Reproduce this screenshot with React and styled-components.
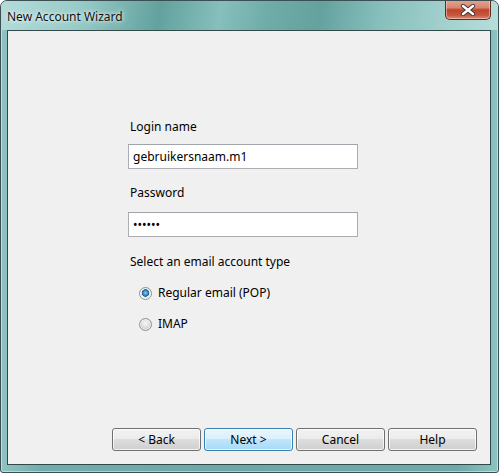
import { useState } from "react";
import styled, { createGlobalStyle } from "styled-components";

const GlobalStyle = createGlobalStyle`
  html, body {
    margin: 0;
    padding: 0;
    background: #ffffff;
  }
  body {
    font-family: "Noto Sans", "Open Sans", sans-serif;
    font-size: 12px;
    color: #000;
  }
`;

export default function App() {
  const [accountType, setAccountType] = useState("pop");
  const [login, setLogin] = useState("gebruikersnaam.m1");
  const [password, setPassword] = useState("123456");

  return (
    <>
      <GlobalStyle />
      <Window>
        <TitleBar>
          <Title>New Account Wizard</Title>
          <CloseButton aria-label="Close">
            <svg width="16" height="12" viewBox="0 0 16 12">
              <path
                d="M3 2 L13 10 M13 2 L3 10"
                stroke="#3a3a3a"
                strokeWidth="4.2"
                strokeLinecap="round"
              />
              <path
                d="M3 2 L13 10 M13 2 L3 10"
                stroke="#ffffff"
                strokeWidth="2.4"
                strokeLinecap="round"
              />
            </svg>
          </CloseButton>
        </TitleBar>
        <Client>
          <Form>
            <Label>Login name</Label>
            <TextInput
              value={login}
              onChange={(e) => setLogin(e.target.value)}
            />
            <Label $top={15} $bottom={11}>Password</Label>
            <TextInput
              type="password"
              value={password}
              onChange={(e) => setPassword(e.target.value)}
            />
            <Label $top={16}>Select an email account type</Label>
            <RadioRow $top={6}>
              <Radio
                $checked={accountType === "pop"}
                onClick={() => setAccountType("pop")}
              />
              Regular email (POP)
            </RadioRow>
            <RadioRow $top={15}>
              <Radio
                $checked={accountType === "imap"}
                onClick={() => setAccountType("imap")}
              />
              IMAP
            </RadioRow>
          </Form>
          <ButtonRow>
            <Button>&lt; Back</Button>
            <Button $primary>Next &gt;</Button>
            <Button>Cancel</Button>
            <Button>Help</Button>
          </ButtonRow>
        </Client>
      </Window>
    </>
  );
}

const Window = styled.div`
  width: 499px;
  height: 473px;
  box-sizing: border-box;
  display: flex;
  flex-direction: column;
  border: 1px solid #3d4f52;
  border-radius: 7px 7px 3px 3px;
  background: linear-gradient(
    90deg,
    #8fc4c1 0%,
    #6faeab 8%,
    #6aa9a6 50%,
    #6caba8 92%,
    #8cc3c0 100%
  );
  box-shadow: inset 0 0 0 1px rgba(255, 255, 255, 0.45);
  overflow: hidden;
`;

const TitleBar = styled.div`
  height: 29px;
  flex: none;
  display: flex;
  align-items: flex-start;
  justify-content: space-between;
  padding: 0 7px 0 6px;
  background: linear-gradient(
    100deg,
    #b4dcd9 0%,
    #97cbc8 16%,
    #62a29e 32%,
    #86bfbb 44%,
    #6eaca8 54%,
    #64a29e 64%,
    #86bfbc 76%,
    #a0cfcc 88%,
    #b6dedb 100%
  );
`;

const Title = styled.span`
  margin-top: 7px;
  font-size: 12px;
  color: #111;
  text-shadow: 0 0 6px rgba(255, 255, 255, 0.9), 0 0 3px rgba(255, 255, 255, 0.8);
`;

const CloseButton = styled.button`
  width: 46px;
  height: 20px;
  margin-top: -1px;
  padding: 0;
  display: flex;
  align-items: center;
  justify-content: center;
  border: 1px solid #5a2a24;
  border-top: none;
  border-radius: 0 0 5px 5px;
  background: linear-gradient(
    180deg,
    #e7a392 0%,
    #d98670 40%,
    #c0432b 52%,
    #c55840 80%,
    #dc8f79 100%
  );
  box-shadow: inset 0 0 0 1px rgba(255, 220, 210, 0.5);
`;

const Client = styled.div`
  flex: 1;
  margin: 0 7px 7px 6px;
  display: flex;
  flex-direction: column;
  background: #f0f0f0;
  border: 1px solid #34484a;
`;

const Form = styled.div`
  flex: 1;
  display: flex;
  flex-direction: column;
  align-items: flex-start;
  padding: 87px 0 0 120px;
`;

const Label = styled.div`
  margin: ${(p) => p.$top || 0}px 0 ${(p) => p.$bottom ?? 9}px 2px;
  height: 17px;
  line-height: 17px;
`;

const TextInput = styled.input`
  box-sizing: border-box;
  width: 230px;
  height: 25px;
  margin: 0;
  padding: 0 4px;
  font-family: "Noto Sans", "Open Sans", sans-serif;
  font-size: 12px;
  color: #000;
  background: #fff;
  border: 1px solid #abadb3;
  border-top-color: #a0a3aa;
  outline: none;
`;

const RadioRow = styled.label`
  display: flex;
  align-items: center;
  gap: 6px;
  height: 16px;
  margin: ${(p) => p.$top || 0}px 0 0 11px;
  line-height: 16px;
`;

const Radio = styled.span`
  width: 13px;
  height: 13px;
  box-sizing: border-box;
  border-radius: 50%;
  border: 1px solid #8e8f8f;
  background: ${(p) =>
    p.$checked
      ? "radial-gradient(circle at 50% 45%, #8fd0f6 0, #2a84c2 2.5px, #1b5d95 3.5px, #dcdcdc 4px, #f4f4f4 6px)"
      : "radial-gradient(circle at 50% 40%, #f8f8f8 0, #e6e6e6 3px, #c9c9c9 6px)"};
  box-shadow: inset 0 0 0 1px rgba(255, 255, 255, 0.7);
  flex: none;
`;

const ButtonRow = styled.div`
  display: flex;
  justify-content: flex-end;
  gap: 3px;
  padding: 0 13px 13px 0;
`;

const Button = styled.button`
  box-sizing: border-box;
  width: 89px;
  height: 23px;
  padding: 0;
  font-family: "Noto Sans", "Open Sans", sans-serif;
  font-size: 12px;
  color: #000;
  border: 1px solid ${(p) => (p.$primary ? "#3c7fb1" : "#707070")};
  border-radius: 3px;
  background: ${(p) =>
    p.$primary
      ? "linear-gradient(180deg, #eaf6fd 0%, #d9f0fc 50%, #bee6fd 50%, #a7d9f5 100%)"
      : "linear-gradient(180deg, #f2f2f2 0%, #ebebeb 50%, #dddddd 50%, #cfcfcf 100%)"};
  box-shadow: inset 0 0 0 1px rgba(255, 255, 255, 0.75);
`;
